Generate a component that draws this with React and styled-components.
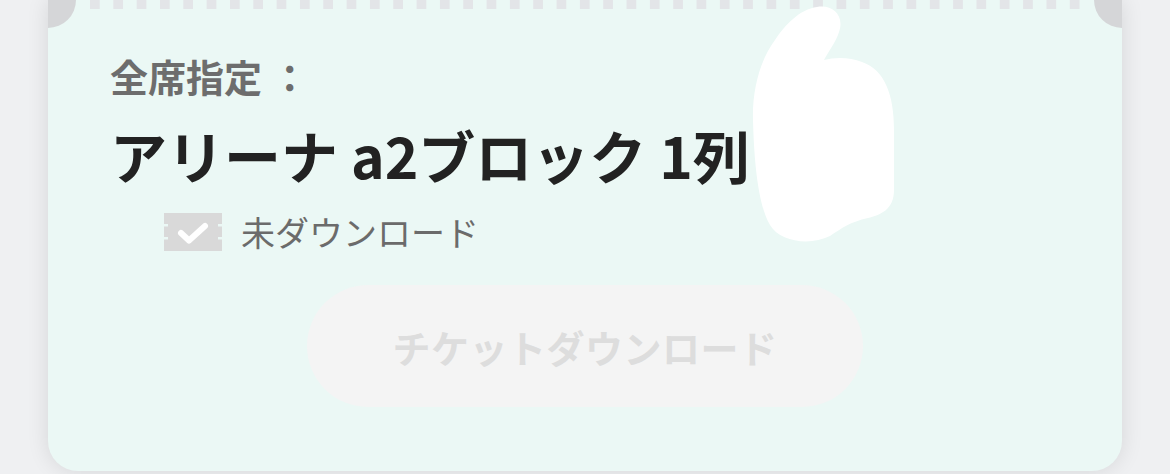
import React from 'react';
import styled, { createGlobalStyle } from 'styled-components';

const GlobalStyle = createGlobalStyle`
  html, body {
    margin: 0;
    padding: 0;
    background: #eff0f2;
    font-family: "Noto Sans CJK JP", "Noto Sans", sans-serif;
  }
`

const Page = styled.div`
  width: 1170px;
  height: 474px;
  padding: 0 48px;
  box-sizing: border-box;
  overflow: hidden;
`

const TicketCard = styled.div`
  position: relative;
  height: 471px;
  background: #ebf8f5;
  border-radius: 0 0 30px 30px;
  box-shadow: 0 0 22px rgba(0, 0, 0, 0.11);
  overflow: hidden;
  display: flex;
  flex-direction: column;
  padding: 0 0 0 62px;
  box-sizing: border-box;

  /* half-circle punch holes at the top corners */
  &::before, &::after {
    content: '';
    position: absolute;
    top: -28px;
    width: 56px;
    height: 56px;
    border-radius: 50%;
    background: #d5d6d8;
  }
  &::before { left: -28px; }
  &::after { right: -28px; }
`

const Perforation = styled.div`
  height: 9px;
  margin: 0 42px 0 -20px;
  background-image: linear-gradient(to right, #e3e5e8 0 10px, transparent 10px);
  background-size: 23.33px 9px;
  background-repeat: repeat-x;
`

const SeatLabel = styled.div`
  margin-top: 48px;
  font-size: 38px;
  line-height: 1;
  font-weight: 700;
  color: #6d6d6d;
  white-space: pre;
`

const SeatTitle = styled.div`
  margin-top: 31px;
  font-size: 57px;
  line-height: 1;
  font-weight: 700;
  color: #222222;
  white-space: pre;
`

const StatusRow = styled.div`
  margin-top: 30px;
  margin-left: 54px;
  display: flex;
  align-items: center;
  gap: 19px;
  height: 38px;
`

const StatusText = styled.span`
  font-size: 34px;
  line-height: 1;
  color: #6b6b6b;
`

const DownloadButton = styled.button`
  align-self: center;
  margin: 34px 0 0 -62px;
  width: 556px;
  height: 122px;
  border: none;
  border-radius: 61px;
  background: #f4f4f4;
  color: #dddddd;
  font-family: inherit;
  font-size: 38px;
  font-weight: 700;
  letter-spacing: 0.5px;
  padding: 0;
`

const Scribble = styled.svg`
  position: absolute;
  left: 702px;
  top: 0;
`

function TicketIcon() {
  return (
    <svg width="58" height="38" viewBox="0 0 58 38">
      <rect x="0" y="0" width="58" height="38" fill="#d9d9d9" />
      <rect x="0" y="11" width="4" height="2.5" fill="#ebf8f5" />
      <rect x="0" y="24" width="4" height="2.5" fill="#ebf8f5" />
      <rect x="54" y="11" width="4" height="2.5" fill="#ebf8f5" />
      <rect x="54" y="24" width="4" height="2.5" fill="#ebf8f5" />
      <path d="M17 20 L25 27.5 L41 13" fill="none" stroke="#ffffff" strokeWidth="6" strokeLinecap="round" strokeLinejoin="round" />
    </svg>
  );
}

export default function App() {
  return (
    <>
      <GlobalStyle />
      <Page>
        <TicketCard>
          <Perforation />
          <SeatLabel>全席指定 ：</SeatLabel>
          <SeatTitle>アリーナ a2ブロック 1列</SeatTitle>
          <StatusRow>
            <TicketIcon />
            <StatusText>未ダウンロード</StatusText>
          </StatusRow>
          <DownloadButton disabled>チケットダウンロード</DownloadButton>
          <Scribble width="150" height="250" viewBox="0 0 150 250">
            <path
              fill="#ffffff"
              d="M67 7 C82 4, 95 15, 89 32 C86 42, 78 52, 74 60 C85 57, 100 57, 112 62 C135 70, 144 95, 144 130 L144 190 C144 210, 130 215, 118 218 C100 222, 92 228, 80 236 C60 246, 30 242, 20 225 C8 205, 4 160, 3 120 C2 90, 10 60, 25 40 C35 25, 50 9, 67 7 Z"
            />
          </Scribble>
        </TicketCard>
      </Page>
    </>
  );
}
